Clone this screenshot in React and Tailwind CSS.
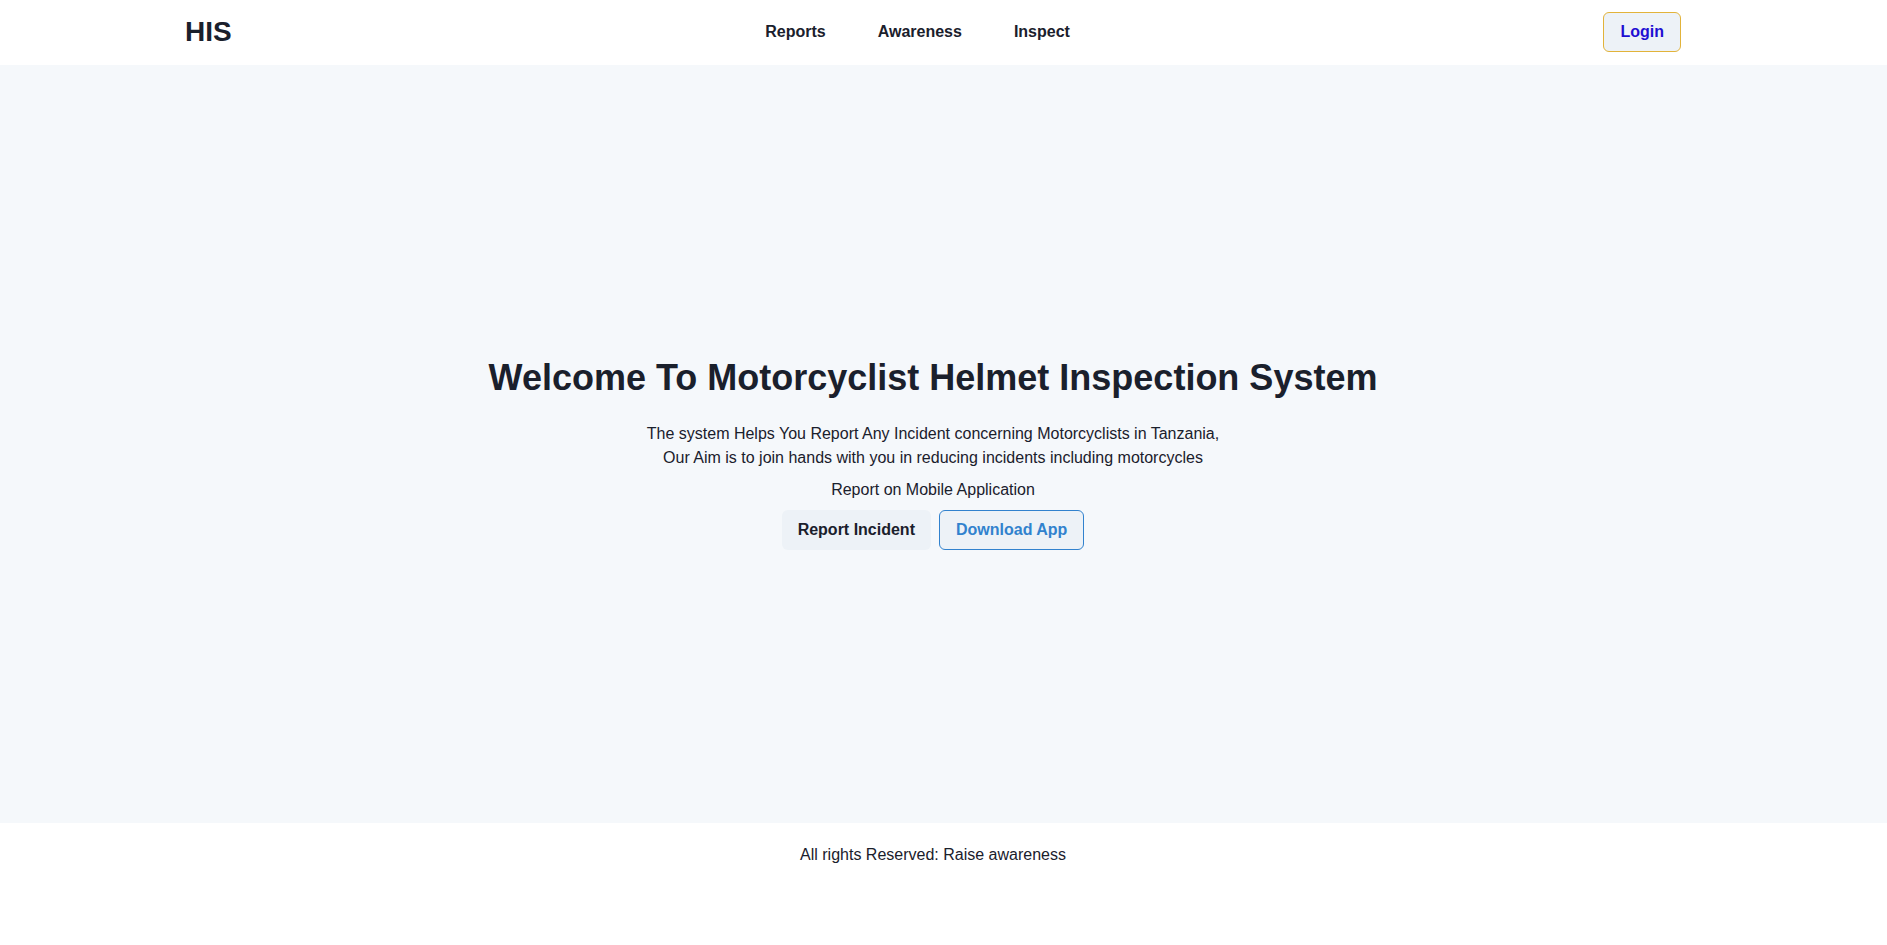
export default function App() {
  return (
    <div className="min-h-screen bg-white text-[#1a202c] font-['Liberation_Sans',Arial,sans-serif]">
      {/* Top bar */}
      <header className="h-[65px] flex items-center justify-between pl-[185px] pr-[206px] pb-[2px] bg-white">
        <span className="text-[28px] font-bold leading-[1.2]">HIS</span>
        <nav className="flex items-center gap-[52px] text-base font-bold">
          <a href="#" className="leading-6">Reports</a>
          <a href="#" className="leading-6">Awareness</a>
          <a href="#" className="leading-6">Inspect</a>
        </nav>
        <button className="h-10 px-4 rounded-md border border-[#e2b33a] bg-[#edf2f7] text-[#1e0fd2] font-bold text-base">
          Login
        </button>
      </header>

      {/* Hero */}
      <main className="h-[758px] bg-[#f5f8fb] flex flex-col items-center justify-center pt-[18px] pr-[21px] text-center">
        <h1 className="text-[36px] font-bold leading-[1.2]">
          Welcome To Motorcyclist Helmet Inspection System
        </h1>
        <p className="mt-[22px] text-base leading-6">
          The system Helps You Report Any Incident concerning Motorcyclists in Tanzania,
          <br />
          Our Aim is to join hands with you in reducing incidents including motorcycles
        </p>
        <p className="mt-2 text-base leading-6">Report on Mobile Application</p>
        <div className="mt-2 flex items-center gap-2">
          <button className="h-10 px-4 rounded-md bg-[#edf2f7] font-bold text-base text-[#1a202c]">
            Report Incident
          </button>
          <button className="h-10 px-4 rounded-md border border-[#3182ce] bg-[#edf2f7] font-bold text-base text-[#3182ce]">
            Download App
          </button>
        </div>
      </main>

      <footer className="py-5 pr-[21px] text-center text-base leading-6">
        All rights Reserved: Raise awareness
      </footer>
    </div>
  );
}
